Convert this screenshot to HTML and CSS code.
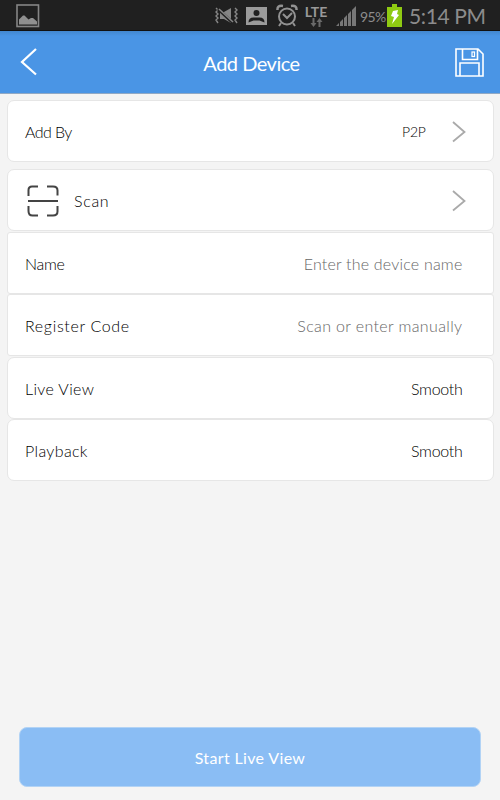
FILE: index.html
```html
<!DOCTYPE html>
<html lang="en">
<head>
<meta charset="utf-8">
<title>Add Device</title>
<link rel="stylesheet" href="styles.css">
</head>
<body>
<div class="status">
  <svg class="photo" width="24" height="24" viewBox="0 0 24 24"><rect x="1" y="1" width="21.500" height="21.500" fill="none" stroke="#858585" stroke-width="1.6"/><path d="M3 20.500v-5l4-4h1.500l4 4 2.500-1.500h2l4 3.500v3z" fill="#909090"/></svg>
  <svg class="mute" width="24" height="18" viewBox="0 0 24 18" fill="none" stroke="#858585"><path d="M2 1l2 2-2 2 2 2-2 2 2 2-2 2 2 3M21 1l2 2-2 2 2 2-2 2 2 2-2 2 2 3" stroke-width="1.4"/><path d="M6 5h4l7-4v15l-7-4H6z" fill="#858585" stroke="none"/><path d="M4 2l15 14" stroke="#202020" stroke-width="3"/><path d="M5 2l14 13" stroke-width="1.6"/></svg>
  <svg class="contact" width="21" height="18" viewBox="0 0 21 18"><path d="M0 0h21v18H0z" fill="#9b9b9b"/><circle cx="10.500" cy="6" r="3" fill="#202020"/><path d="M2.500 15.500q0-5 5-5h6q5 0 5 5l-5-2h-6z" fill="#202020"/></svg>
  <svg class="alarm" width="22" height="23" viewBox="0 0 22 23" fill="none" stroke="#929292" stroke-width="2"><circle cx="11" cy="12.500" r="8"/><path d="M7 10l4 4 5-5M5 19l-2 3M17 19l2 3"/><path d="M1.500 6Q1 1 7 2M20.500 6Q21 1 15 2" stroke-width="2.500"/></svg>
  <div class="network"><span>LTE</span><svg width="13" height="9" viewBox="0 0 12 9" fill="#6a6a6a"><path d="M2 0h2v5h2L3 9 0 5h2zM8 9h2V4h2L9 0 6 4h2z"/></svg></div>
  <svg class="signal" width="21" height="21" viewBox="0 0 21 21" fill="#777"><path d="M0 20l3-3v3zM4 16l3-3v7H4zM8 12l3-3v11H8zM12 8l3-3v15h-3zM16 4l4-4v20h-4z"/></svg>
  <span class="percent">95%</span>
  <svg class="battery" width="15" height="23" viewBox="0 0 15 23"><path d="M0 3h5V0h5v3h5v20H0z" fill="#8fca12"/><path d="M6 7l5-1-1 4 2 1-7 9 2-7-3-1z" fill="#fff"/></svg>
  <span class="clock">5:14 PM</span>
</div>
<header class="bar">
  <svg class="back" width="18" height="30" viewBox="0 0 18 30"><path d="M16 2L2 15l14 12.500" fill="none" stroke="#fff" stroke-width="2.200"/></svg>
  <h1>Add Device</h1>
  <svg class="save" width="29" height="29" viewBox="0 0 29 29" fill="none" stroke="#fff" stroke-width="1.600"><path d="M1 1h22l5 5v22H1zM7.500 1v10.500h15V1M5 28V15h19v13"/><rect x="17" y="4" width="2.500" height="4.500" stroke-width="1.200"/></svg>
</header>
<main>
  <section class="card add"><span class="t-add">Add By</span><span class="value p2p">P2P</span><svg class="chev" width="14" height="22" viewBox="0 0 14 22"><path d="M1 1l11.500 10L1 20.500"/></svg></section>
  <section class="card"><svg class="scan" width="32" height="32" viewBox="0 0 32 32"><path d="M1.500 11V5Q1.500 1.500 5 1.500h6M20 1.500h6q4.500 0 4.500 4v5M1.500 21v5q0 4.500 4 4.500H11M20 30.500h6q4.500 0 4.500-4V21M1 16h30"/></svg><span class="t-scan">Scan</span><svg class="chev" width="14" height="22" viewBox="0 0 14 22"><path d="M1 1l11.500 10L1 20.500"/></svg></section>
  <section class="card square"><span class="t-name">Name</span><span class="hint h-name">Enter the device name</span></section>
  <section class="card square"><span class="t-code">Register Code</span><span class="hint h-code">Scan or enter manually</span></section>
  <section class="card"><span class="t-live">Live View</span><span class="value">Smooth</span></section>
  <section class="card"><span class="t-play">Playback</span><span class="value">Smooth</span></section>
</main>
<footer><button>Start Live View</button></footer>
</body>
</html>
```
FILE: styles.css
```css
* { box-sizing: border-box; }
body {
  margin: 0;
  width: 500px;
  height: 800px;
  display: flex;
  flex-direction: column;
  background: #f4f4f4;
  color: #000;
  font: 300 16px/20px Lato, "Open Sans", sans-serif;
  overflow: hidden;
  white-space: nowrap;
}
svg { display: block; flex: none; }
.status {
  height: 31px;
  flex: none;
  display: flex;
  align-items: flex-start;
  background: #202020;
  color: #8c8c8c;
  border-bottom: 1px solid #111;
}
.photo { margin: 4px 0 0 16px; }
.mute { margin: 7px 0 0 174px; }
.contact { margin: 7px 0 0 8px; }
.alarm { margin: 4px 0 0 9px; }
.network {
  width: 24px;
  margin: 5px 0 0 6px;
  display: flex;
  flex-direction: column;
  align-items: center;
  font: 700 14px/13px Lato, sans-serif;
  color: #999;
}
.signal { margin: 6px 0 0 8px; }
.percent { width: 28px; margin: 7px 0 0 3px; font-size: 14px; font-weight: 400; letter-spacing: -.6px; }
.battery { margin: 4px 0 0 -1px; }
.clock { margin: 4px 0 0 7px; font-size: 21px; line-height: 24px; font-weight: 400; letter-spacing: -.4px; }
.bar {
  height: 63px;
  flex: none;
  display: flex;
  align-items: center;
  justify-content: space-between;
  padding: 0 16px 0 20px;
  background: linear-gradient(#4287cf, #4a95e5 5px);
  border-bottom: 1px solid #91a9c4;
  color: #fff;
}
h1 { margin: 2px 0 0 10px; font-size: 20px; font-weight: 400; letter-spacing: -.5px; }
main { padding: 6px 6.5px 0; }
.card {
  height: 62px;
  margin-bottom: .5px;
  display: flex;
  align-items: center;
  padding: 2px 30px 0 17.5px;
  background: #fff;
  border: 1px solid #e6e6e6;
  border-radius: 7px;
}
.square { border-radius: 3px; }
.add { margin-bottom: 7px; }
.value, .hint { margin-left: auto; letter-spacing: -.3px; }
.hint { color: #666; }
.h-name { letter-spacing: .2px; }
.h-code { letter-spacing: .37px; }
.p2p { margin-right: 26px; font-size: 14px; }
.chev { margin: 0 -3px 0 0; }
.t-add { letter-spacing: -.6px; }
.t-scan { margin-left: 15px; margin-right: auto; letter-spacing: .7px; }
.t-name { letter-spacing: -.3px; }
.t-code { letter-spacing: .65px; }
.t-live, .t-play { letter-spacing: .35px; }
.chev path { fill: none; stroke: #aaa; stroke-width: 1.8; }
.scan { margin-left: 2px; }
.scan path { fill: none; stroke: #444; stroke-width: 2; }
footer { margin: auto 19px 13px; }
button {
  display: block;
  width: 100%;
  height: 60px;
  padding: 2px 0 0;
  border: 1px solid #b2d3f5;
  border-radius: 8px;
  background: #8abdf4;
  color: #fff;
  font: 400 16px/20px Lato, sans-serif;
  letter-spacing: .35px;
}
```
